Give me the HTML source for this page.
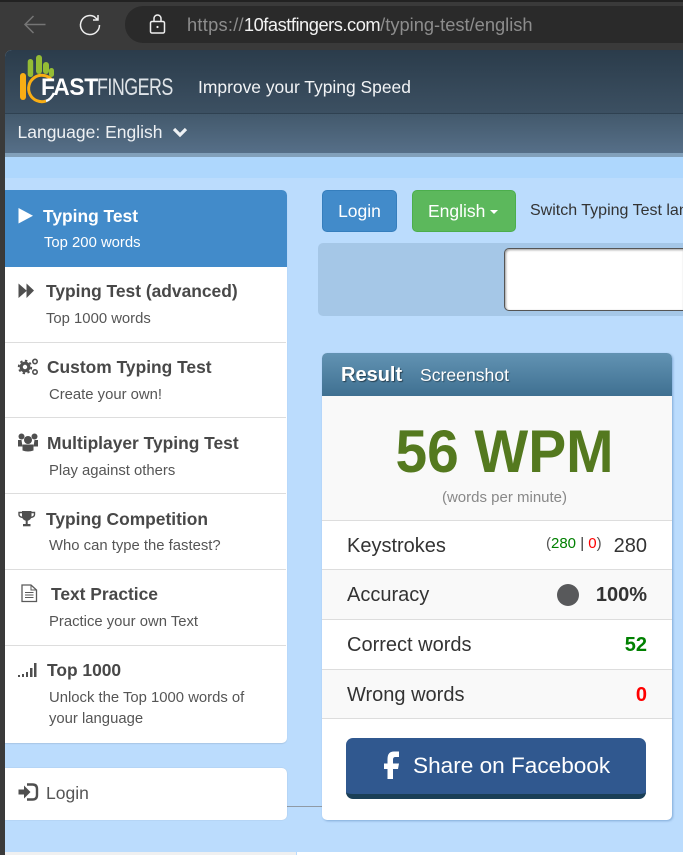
<!DOCTYPE html>
<html><head><meta charset="utf-8"><style>
html,body{margin:0;padding:0;width:683px;height:855px;overflow:hidden;background:#3a3a3a;font-family:"Liberation Sans",sans-serif}
.a{position:absolute;white-space:nowrap}
svg{position:absolute;overflow:visible}
.t{font-size:17.400px;font-weight:700;color:#484848;line-height:20px}
.s{font-size:14.850px;color:#555;line-height:20px;margin-top:1px}
.hr{position:absolute;left:5px;width:281px;height:1px;background:#ddd}
.row{position:absolute;left:322px;width:350px}
.lb{position:absolute;left:347px;font-size:20px;color:#333;line-height:24px;white-space:nowrap}
</style></head><body>
<div style="position:absolute;left:0;top:0;width:683px;height:855px;overflow:hidden">
<div class="a" style="left:0;top:0;width:683px;height:2px;background:#222"></div>
<div class="a" style="left:0;top:2px;width:683px;height:48px;background:#3a3a3a"></div>
<div class="a" style="left:125px;top:6px;width:558px;height:37px;background:#2a2a2a;border-radius:18px 0 0 18px"></div>
<svg style="left:0;top:0" width="200" height="50"><path d="M45.500 24.500H25.500M33.500 16L25 24.500L33.500 33" fill="none" stroke="#757575" stroke-width="1.500"/>
<path d="M99.500 25A9.500 9.500 0 1 1 94 16.400L98 20M98 15V20H93" fill="none" stroke="#eee" stroke-width="1.500"/>
<rect x="150.500" y="21.500" width="14" height="11.500" rx="1.500" fill="none" stroke="#eee" stroke-width="1.500"/><path d="M154 21V18.500a3.500 3.500 0 0 1 7 0V21" fill="none" stroke="#eee" stroke-width="1.500"/><circle cx="157.500" cy="27" r="1.100" fill="#eee"/></svg>
<div class="a" style="left:187px;top:13px;font-size:18.300px;line-height:24px;color:#8d8d8d"><span style="letter-spacing:.25px">https://</span><span style="color:#f2f2f2;letter-spacing:-.47px">10fastfingers.com</span>/typing-test/english</div>

<div class="a" style="left:5px;top:50px;width:678px;height:805px;background:#bbdcfd;border-radius:7px 0 0 0;overflow:hidden">
<div class="a" style="left:0;top:0;width:678px;height:63px;background:linear-gradient(#2b3c4b,#3c5062)"></div>
<div class="a" style="left:0;top:63px;width:678px;height:1px;background:#2f4151"></div>
<div class="a" style="left:0;top:64px;width:678px;height:39px;background:linear-gradient(#43596c,#566f88)"></div>
<div class="a" style="left:0;top:103px;width:678px;height:4px;background:#82a0ba"></div>
<div class="a" style="left:0;top:107px;width:678px;height:21px;background:#aed7fd"></div>
</div>

<!-- logo -->
<svg style="left:0;top:0" width="180" height="110">
<g fill="#94bc35"><rect x="27.700" y="59" width="5.500" height="18" rx="2.700"/><rect x="36" y="55" width="6" height="19" rx="3"/><rect x="43" y="62" width="6" height="12" rx="3"/><rect x="49" y="68" width="5" height="9" rx="2.500"/></g>
<rect x="20" y="73" width="6" height="27" rx="3" fill="#f9ae14"/>
<path d="M51.500 79.500A13.200 13.200 0 1 0 46 101" fill="none" stroke="#f9ae14" stroke-width="3"/>
<path d="M46 101Q51 99.500 54 93" fill="none" stroke="#fff" stroke-width="2.500"/>
</svg>
<div class="a" style="left:41px;top:75px;font-size:24px;line-height:26px;font-weight:700;color:#fff;letter-spacing:-.4px;transform-origin:0 0;transform:scaleX(.95)">FAST</div>
<div class="a" style="left:96.500px;top:75px;font-size:24px;line-height:26px;color:#dfe4e8;letter-spacing:-.7px;transform-origin:0 0;transform:scaleX(.745)">FINGERS</div>
<div class="a" style="left:198px;top:76px;font-size:17.450px;line-height:22px;color:#f2f4f6">Improve your Typing Speed</div>
<div class="a" style="left:17.500px;top:121px;font-size:17.500px;line-height:22px;color:#eef1f4">Language: English</div>
<svg style="left:172px;top:126px" width="16" height="12"><path d="M2 3L8 9L14 3" fill="none" stroke="#eef1f4" stroke-width="3.200"/></svg>

<!-- sidebar -->
<div class="a" style="left:5px;top:190px;width:282px;height:553px;background:#fff;border-radius:0 5px 5px 0;box-shadow:0 1px 1px rgba(0,0,0,.1)"></div>
<div class="a" style="left:5px;top:190px;width:282px;height:77px;background:#428bca;border-radius:0 5px 0 0"></div>
<svg style="left:18px;top:208px" width="16" height="16"><path d="M0.500 0L15 7.700L0.500 15.500Z" fill="#fff"/></svg>
<div class="a t" style="left:43px;top:206px;color:#fff">Typing Test</div>
<div class="a s" style="left:44px;top:232px;color:#fff">Top 200 words</div>

<svg style="left:18px;top:283px" width="17" height="16" fill="#4f4f4f"><path d="M0.500 .5L8.500 7.500V.5L16 7.500L8.500 15V8L.5 15Z"/></svg>
<div class="a t" style="left:46px;top:281px">Typing Test (advanced)</div>
<div class="a s" style="left:46px;top:308px">Top 1000 words</div>
<div class="hr" style="top:342px"></div>

<svg style="left:18px;top:358px" width="20" height="18"><circle cx="7" cy="9" r="3.800" fill="none" stroke="#4f4f4f" stroke-width="3.200"/><circle cx="7" cy="9" r="6.300" fill="none" stroke="#4f4f4f" stroke-width="1.800" stroke-dasharray="2.400 2.500"/><circle cx="17" cy="3.500" r="2.200" fill="none" stroke="#4f4f4f" stroke-width="1.600"/><circle cx="17" cy="14" r="2.200" fill="none" stroke="#4f4f4f" stroke-width="1.600"/></svg>
<div class="a t" style="left:47px;top:357px">Custom Typing Test</div>
<div class="a s" style="left:49px;top:384px">Create your own!</div>
<div class="hr" style="top:417px"></div>

<svg style="left:18px;top:433px" width="20" height="19" fill="#4f4f4f"><circle cx="3.500" cy="3.500" r="3"/><circle cx="16.500" cy="3.500" r="3"/><circle cx="10" cy="7" r="4"/><path d="M0 7H3.500L4.500 13.500H0ZM16.500 7H20V13.500H15.500Z"/><path d="M4.500 11.500H15.500V17.500Q10 19.500 4.500 17.500Z"/></svg>
<div class="a t" style="left:47px;top:433px">Multiplayer Typing Test</div>
<div class="a s" style="left:49px;top:460px">Play against others</div>
<div class="hr" style="top:493px"></div>

<svg style="left:18px;top:510px" width="18" height="17"><path d="M4 1H13.500V6Q13.500 10 8.700 11Q4 10 4 6Z" fill="#4f4f4f"/><path d="M4 2.500H1V4.500Q1 7 5 7.500M13.500 2.500H16.500V4.500Q16.500 7 12.500 7.500" fill="none" stroke="#4f4f4f" stroke-width="1.400"/><rect x="7.700" y="10" width="2" height="4" fill="#4f4f4f"/><rect x="5" y="14" width="7.500" height="2.300" fill="#4f4f4f"/></svg>
<div class="a t" style="left:46px;top:509px">Typing Competition</div>
<div class="a s" style="left:49px;top:535px">Who can type the fastest?</div>
<div class="hr" style="top:569px"></div>

<svg style="left:21px;top:584px" width="16" height="19"><path d="M1 1H10L15.500 6V17.500H1Z" fill="none" stroke="#5a5a5a" stroke-width="1.300"/><path d="M10 1V6H15.500" fill="none" stroke="#5a5a5a" stroke-width="1"/><path d="M4 8.500H12.500M4 11H12.500M4 13.500H12.500" stroke="#5a5a5a" stroke-width="1.100"/></svg>
<div class="a t" style="left:51px;top:584px">Text Practice</div>
<div class="a s" style="left:49px;top:611px">Practice your own Text</div>
<div class="hr" style="top:645px"></div>

<svg style="left:18px;top:662px" width="20" height="16" fill="#4f4f4f"><rect x="0" y="13" width="2" height="2"/><rect x="4" y="12" width="2" height="3"/><rect x="8" y="10" width="2" height="5"/><rect x="12" y="6" width="2.500" height="9"/><rect x="16" y="1" width="2.500" height="14"/></svg>
<div class="a t" style="left:47px;top:660px">Top 1000</div>
<div class="a s" style="left:49px;top:687px">Unlock the Top 1000 words of</div>
<div class="a s" style="left:49px;top:708px">your language</div>

<div class="a" style="left:287px;top:806px;width:36px;height:1px;background:#8f9aa5"></div>
<div class="a" style="left:5px;top:768px;width:282px;height:52px;background:#fff;border-radius:0 5px 5px 0;box-shadow:0 0 1px rgba(0,0,0,.2)"></div>
<svg style="left:18px;top:783px" width="21" height="18"><path d="M0.500 6.500H6V2.500L12.500 9L6 15.500V11.500H.5Z" fill="#4f4f4f"/><path d="M9 1.500H14.500Q19 1.500 19 6V12Q19 16.500 14.500 16.500H9" fill="none" stroke="#4f4f4f" stroke-width="2.400"/></svg>
<div class="a" style="left:46px;top:782px;font-size:17.500px;line-height:22px;color:#555">Login</div>
<div class="a" style="left:5px;top:852px;width:291px;height:3px;background:#f0f0f0"></div>
<div class="a" style="left:297px;top:852px;width:386px;height:3px;background:#fff"></div>

<!-- main -->
<div class="a" style="left:322px;top:190px;width:75px;height:42px;background:#428bca;border:1px solid #357ebd;box-sizing:border-box;border-radius:5px;color:#fff;font-size:17.500px;line-height:40px;text-align:center">Login</div>
<div class="a" style="left:412px;top:190px;width:104px;height:42px;background:#5cb85c;border:1px solid #4cae4c;box-sizing:border-box;border-radius:5px;color:#fff;font-size:17.500px;line-height:40px;padding-left:15px">English</div>
<div class="a" style="left:490px;top:210px;width:0;height:0;border-left:4.500px solid transparent;border-right:4.500px solid transparent;border-top:4.500px solid #fff"></div>
<div class="a" style="left:530px;top:201px;font-size:16px;line-height:20px;color:#333">Switch Typing Test language</div>
<div class="a" style="left:318px;top:243px;width:365px;height:73px;background:#a5c7e7;border-radius:5px 0 0 5px"></div>
<div class="a" style="left:504px;top:248px;width:179px;height:63px;background:#fff;border:1px solid #555;border-right:0;box-sizing:border-box;border-radius:5px 0 0 5px;box-shadow:inset 1px 1px 2px rgba(0,0,0,.4)"></div>

<!-- result card -->
<div class="a" style="left:322px;top:353px;width:350px;height:467px;background:#fff;border-radius:5px;box-shadow:1px 1px 2px rgba(60,110,170,.45)"></div>
<div class="a" style="left:322px;top:353px;width:350px;height:43px;background:linear-gradient(#6293b3,#3f7091);border-radius:5px 5px 0 0"></div>
<div class="a" style="left:341px;top:363px;font-size:20px;line-height:24px;font-weight:700;color:#fff;text-shadow:1px 1px 1px rgba(0,0,0,.5)">Result</div>
<div class="a" style="left:420px;top:364px;font-size:17.600px;line-height:22px;color:#fff;text-shadow:1px 1px 1px rgba(0,0,0,.35)">Screenshot</div>
<div class="row" style="top:396px;height:124px;background:#f9f9f9"></div>
<div class="a" style="left:322px;top:418px;width:365px;text-align:center;font-size:60px;line-height:68px;font-weight:700;color:#54791f;transform:scaleX(.948)">56 WPM</div>
<div class="a" style="left:322px;top:489px;width:365px;text-align:center;font-size:15px;line-height:18px;color:#888">(words per minute)</div>
<div class="row" style="top:520px;height:1px;background:#ddd"></div>
<div class="row" style="top:569px;height:51px;background:#f9f9f9;border-top:1px solid #ddd;border-bottom:1px solid #ddd;box-sizing:border-box"></div>
<div class="row" style="top:669px;height:50px;background:#f9f9f9;border-top:1px solid #ddd;border-bottom:1px solid #ddd;box-sizing:border-box"></div>
<div class="lb" style="top:534px">Keystrokes</div>
<div class="a" style="left:546px;top:535px;font-size:15px;line-height:18px;color:#555">(<span style="color:#008000">280</span> <span style="color:#333">|</span> <span style="color:#f00">0</span>)</div>
<div class="a" style="right:36px;top:534px;font-size:20px;line-height:24px;color:#333">280</div>
<div class="lb" style="top:583px">Accuracy</div>
<div class="a" style="left:557px;top:584px;width:22px;height:22px;border-radius:50%;background:#58595b"></div>
<div class="a" style="right:36px;top:583px;font-size:20px;line-height:24px;font-weight:700;color:#333">100%</div>
<div class="lb" style="top:633px">Correct words</div>
<div class="a" style="right:36px;top:633px;font-size:20px;line-height:24px;font-weight:700;color:#008000">52</div>
<div class="lb" style="top:683px">Wrong words</div>
<div class="a" style="right:36px;top:683px;font-size:20px;line-height:24px;font-weight:700;color:#f00">0</div>

<div class="a" style="left:346px;top:738px;width:300px;height:61px;background:#30588f;border-bottom:5px solid #1a3f57;box-sizing:border-box;border-radius:7px"></div>
<svg style="left:384px;top:751px" width="16" height="28"><path d="M3.500 28V18H0V12.500H3.500V8Q3.500 .5 10 .5H15V6H11.500Q9 6 9 8.500V12.500H15L14 18H9V28Z" fill="#fff"/></svg>
<div class="a" style="left:413px;top:751px;font-size:22.600px;line-height:30px;color:#fff">Share on Facebook</div>
</div>
</body></html>
